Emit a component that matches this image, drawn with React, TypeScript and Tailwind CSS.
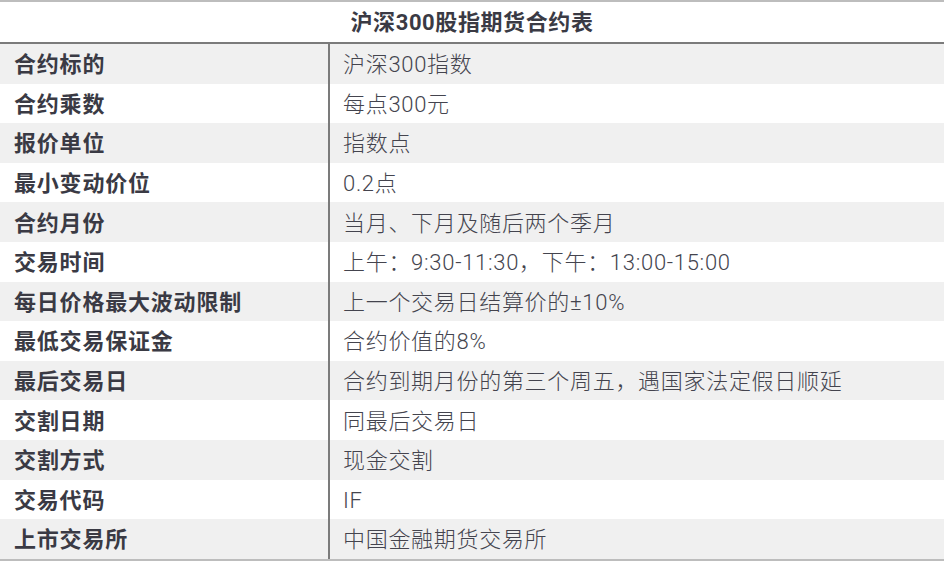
const rows: [string, string][] = [
  ['合约标的', '沪深300指数'],
  ['合约乘数', '每点300元'],
  ['报价单位', '指数点'],
  ['最小变动价位', '0.2点'],
  ['合约月份', '当月、下月及随后两个季月'],
  ['交易时间', '上午：9:30-11:30，下午：13:00-15:00'],
  ['每日价格最大波动限制', '上一个交易日结算价的±10%'],
  ['最低交易保证金', '合约价值的8%'],
  ['最后交易日', '合约到期月份的第三个周五，遇国家法定假日顺延'],
  ['交割日期', '同最后交易日'],
  ['交割方式', '现金交割'],
  ['交易代码', 'IF'],
  ['上市交易所', '中国金融期货交易所'],
]

export default function App() {
  return (
    <div
      className="w-[944px] h-[564px] bg-white text-[#3a3a44] overflow-hidden"
      style={{ fontFamily: 'Roboto, "Noto Sans CJK SC", sans-serif' }}
    >
      <div className="border-t-2 border-[#bdbdbd]">
        {/* Title */}
        <div className="h-[42px] flex items-center justify-center text-[22px] tracking-[0.6px] font-bold border-b-2 border-[#7b7b7b]">
          沪深300股指期货合约表
        </div>

        {/* Rows */}
        <div className="border-b-2 border-[#bdbdbd]">
          {rows.map(([label, value], i) => (
            <div
              key={label}
              className={`flex h-[39.6px] ${i % 2 === 0 ? 'bg-[#f0f0f0]' : 'bg-white'}`}
            >
              <div className="w-[330px] pl-[14px] pt-[2px] flex items-center text-[22px] tracking-[0.8px] font-bold border-r-2 border-[#7b7b7b]">
                {label}
              </div>
              <div className="flex-1 pl-[13px] pt-[2px] flex items-center text-[22px] tracking-[0.7px] font-light text-[#44444e]">
                {value}
              </div>
            </div>
          ))}
        </div>
      </div>
    </div>
  )
}
